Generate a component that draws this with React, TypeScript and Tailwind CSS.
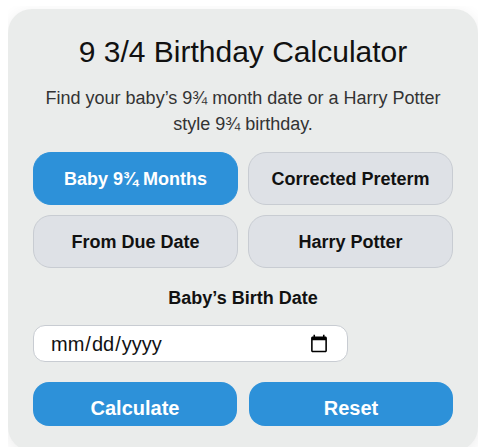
import { useState } from "react";

const modes = ["Baby 9¾ Months", "Corrected Preterm", "From Due Date", "Harry Potter"];

const actionClass =
  "h-11 rounded-2xl bg-[#2d91d9] pt-2 text-xl leading-6 font-bold text-white";

export default function App() {
  const [mode, setMode] = useState(modes[0]);
  const [date, setDate] = useState("");

  return (
    <main
      className="mt-1.5 mr-3.5 ml-2 overflow-hidden pt-[3px] text-[#111111]"
      style={{ fontFamily: '"Liberation Sans", Arial, sans-serif' }}
    >
      <form
        className="rounded-3xl bg-[#eaeceb] p-[25px] text-center shadow-[0_4px_16px_rgba(0,0,0,0.08)]"
        onSubmit={(e) => e.preventDefault()}
      >
        <h1 className="text-3xl leading-9">9 3/4 Birthday Calculator</h1>
        <p className="my-[15px] text-lg leading-[26px] text-[#333333]">
          Find your baby’s 9¾ month date or a Harry Potter style 9¾ birthday.
        </p>
        <div className="grid grid-cols-2 gap-2.5">
          {modes.map((name) => (
            <button
              key={name}
              type="button"
              aria-pressed={mode === name}
              onClick={() => setMode(name)}
              className={
                mode === name
                  ? "h-[53px] rounded-[18px] border border-[#2d91d9] bg-[#2d91d9] text-lg font-bold text-white"
                  : "h-[53px] rounded-[18px] border border-[#c8ccd2] bg-[#dee1e6] text-lg font-bold"
              }
            >
              {name}
            </button>
          ))}
        </div>
        <label htmlFor="birth-date" className="mt-[18px] block text-lg leading-6 font-bold">
          Baby’s Birth Date
        </label>
        <input
          id="birth-date"
          type="date"
          value={date}
          onChange={(e) => setDate(e.target.value)}
          className="mt-[15px] block h-[37px] w-3/4 rounded-xl border border-[#c8ccd2] bg-white px-4 text-xl"
        />
        <div className="mt-5 grid grid-cols-2 gap-3">
          <button type="submit" className={actionClass}>
            Calculate
          </button>
          <button type="button" className={actionClass} onClick={() => setDate("")}>
            Reset
          </button>
        </div>
      </form>
    </main>
  );
}
